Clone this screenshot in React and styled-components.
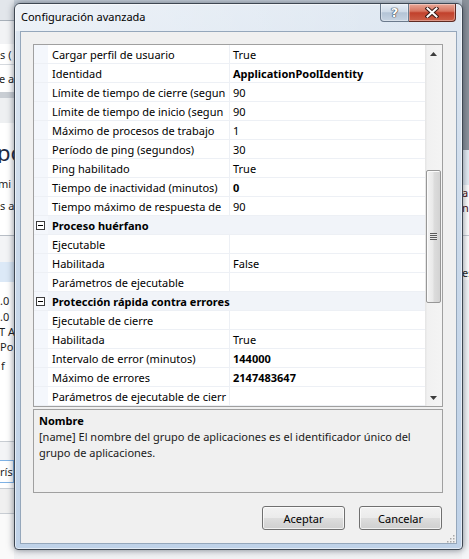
import React from 'react';
import styled, { createGlobalStyle } from 'styled-components';

const GlobalStyle = createGlobalStyle`
  html, body {
    margin: 0;
    padding: 0;
  }
  body {
    width: 469px;
    height: 559px;
    overflow: hidden;
    font-family: "Noto Sans", "DejaVu Sans", sans-serif;
    font-size: 11px;
    color: #000;
  }
`;

// ---- background window (only thin strips show around the dialog) ----

const Desktop = styled.div`
  position: relative;
  width: 469px;
  height: 559px;
  display: flex;
  overflow: hidden;
  background: #eef0f3;
`;

const LeftStrip = styled.div`
  width: 14px;
  display: flex;
  flex-direction: column;
  overflow: hidden;
  background: #fff;
`;

const Middle = styled.div`
  flex: 1;
  background: linear-gradient(180deg, #c9d2dc 0%, #dfe4ea 20%, #f1f2f4 100%);
`;

const RightStrip = styled.div`
  width: 7px;
  display: flex;
  flex-direction: column;
  overflow: hidden;
  background: #fff;
`;

const BackRow = styled.div`
  height: ${({ $h }) => $h}px;
  flex-shrink: 0;
  background: ${({ $bg }) => $bg || '#fff'};
  display: flex;
  align-items: ${({ $align }) => $align || 'center'};
  white-space: nowrap;
  overflow: hidden;
  font-size: ${({ $size }) => $size || 11}px;
  line-height: 1;
  color: ${({ $color }) => $color || '#1e1e1e'};
  margin-left: ${({ $shift }) => $shift || 0}px;
  box-sizing: border-box;
  border: ${({ $box }) => ($box ? '1px solid #7fb2e5' : 'none')};
`;

const leftRows = [
  { h: 20, bg: '#e2e6eb' },
  { h: 1, bg: '#a8b0b9' },
  { h: 23, bg: '#f2f3f5' },
  { h: 20, text: 's (' },
  { h: 1, bg: '#d5d9de' },
  { h: 27, text: 'e ap', shift: -1 },
  { h: 6, bg: '#c9ced4' },
  { h: 25, bg: '#eef0f2' },
  { h: 40, text: 'po', size: 22, color: '#1c2b45', align: 'flex-end', shift: -3 },
  { h: 8 },
  { h: 24, text: 'mi', shift: -2 },
  { h: 20, text: 's a' },
  { h: 20 },
  { h: 1, bg: '#b8bec6' },
  { h: 26, bg: '#f3f4f6' },
  { h: 20, bg: '#dce9f7' },
  { h: 10 },
  { h: 16, text: '.0' },
  { h: 16, text: '.0' },
  { h: 14, text: 'T A', shift: -1 },
  { h: 16, text: 'Po' },
  { h: 22, text: 'f', shift: 1 },
  { h: 65 },
  { h: 1, bg: '#c8cdd3' },
  { h: 18, bg: '#f3f4f6' },
  { h: 23, text: 'ríst', box: true, shift: -1 },
  { h: 5 },
  { h: 1, bg: '#c8cdd3' },
  { h: 24, bg: '#f0f0f0' },
  { h: 1, bg: '#c8cdd3' },
  { h: 60, bg: '#fafafa' },
];

const rightRows = [
  { h: 150, bg: '#8c939c' },
  { h: 35, bg: '#e6edf5' },
  { h: 15, text: 'a', color: '#4a1010' },
  { h: 15, text: 'n', color: '#4a1010' },
  { h: 20 },
  { h: 1, bg: '#c8cdd3' },
  { h: 28 },
  { h: 16, text: 'es' },
  { h: 280, bg: '#f4f6f8' },
];

// ---- dialog frame ----

const Dialog = styled.div`
  position: absolute;
  left: 14px;
  top: 3px;
  width: 449px;
  height: 547px;
  box-sizing: border-box;
  border: 1px solid #3e4752;
  border-radius: 6px 6px 4px 4px;
  background: linear-gradient(180deg, #dfe8f2 0%, #cad9ea 45%, #bfd2e8 100%);
  box-shadow: 0 0 7px rgba(20, 30, 45, 0.55), inset 0 0 0 1px rgba(255, 255, 255, 0.55);
  display: flex;
  flex-direction: column;
`;

const TitleBar = styled.div`
  height: 27px;
  flex-shrink: 0;
  display: flex;
  align-items: flex-start;
  background: linear-gradient(100deg, rgba(255, 255, 255, 0.45) 0%, rgba(255, 255, 255, 0.2) 55%, rgba(255, 255, 255, 0) 100%);
  border-radius: 5px 5px 0 0;
`;

const Title = styled.div`
  padding: 5px 0 0 6px;
  font-size: 11px;
  line-height: 15px;
  color: #000;
`;

const CaptionButtons = styled.div`
  margin-left: auto;
  margin-right: 6px;
  display: flex;
`;

const CaptionButton = styled.div`
  width: ${({ $w }) => $w}px;
  height: 18px;
  box-sizing: border-box;
  border: 1px solid ${({ $close }) => ($close ? '#5e2a22' : '#6b7a8c')};
  border-top: none;
  border-left-width: ${({ $close }) => ($close ? 0 : 1)}px;
  border-radius: ${({ $close }) => ($close ? '0 0 4px 0' : '0 0 0 4px')};
  background: ${({ $close }) =>
    $close
      ? 'linear-gradient(180deg, #e9a898 0%, #d77560 42%, #c1412c 52%, #cc6048 100%)'
      : 'linear-gradient(180deg, #e7eef6 0%, #cfdbe8 45%, #b4c4d6 52%, #c7d4e2 100%)'};
  box-shadow: inset 0 0 0 1px rgba(255, 255, 255, 0.35);
  display: flex;
  align-items: center;
  justify-content: center;
`;

const HelpGlyph = styled.span`
  font-family: "DejaVu Sans", sans-serif;
  font-weight: bold;
  font-size: 13px;
  line-height: 1;
  color: #fff;
  text-shadow: 0 0 1px #2c3440, 0 0 1px #2c3440, 0 0 1px #2c3440;
`;

const Client = styled.div`
  position: relative;
  flex: 1;
  margin: 0 5px 5px 5px;
  border: 1px solid #95a7bb;
  background: #f0f0f0;
  padding: 12px 13px 13px 12px;
  display: flex;
  flex-direction: column;
`;

// ---- property grid ----

const Grid = styled.div`
  height: 363px;
  box-sizing: border-box;
  border: 1px solid #a0a0a0;
  background: #fff;
  display: flex;
`;

const RowsArea = styled.div`
  width: 391px;
  overflow: hidden;
  display: flex;
  flex-direction: column;
`;

const Row = styled.div`
  height: 19px;
  flex-shrink: 0;
  box-sizing: border-box;
  border-bottom: 1px solid #edf0f5;
  display: flex;
  background: ${({ $category }) => ($category ? '#f1f4f9' : '#fff')};
`;

const Margin = styled.div`
  width: 14px;
  flex-shrink: 0;
  background: #f4f7fc;
  display: flex;
  align-items: center;
  padding: 1px 0 0 2px;
  box-sizing: border-box;
`;

const NameCell = styled.div`
  width: 182px;
  flex-shrink: 0;
  box-sizing: border-box;
  border-right: 1px solid #edf0f5;
  padding: 2px 0 0 4px;
  line-height: 16px;
  white-space: nowrap;
  overflow: hidden;
`;

const ValueCell = styled.div`
  flex: 1;
  padding: 2px 0 0 3px;
  line-height: 16px;
  white-space: nowrap;
  overflow: hidden;
  font-weight: ${({ $bold }) => ($bold ? 'bold' : 'normal')};
`;

const CategoryLabel = styled.div`
  padding: 2px 0 0 4px;
  line-height: 16px;
  font-weight: bold;
  white-space: nowrap;
`;

const Collapse = styled.div`
  width: 9px;
  height: 9px;
  box-sizing: border-box;
  border: 1px solid #3c3c3c;
  background: #fff;
  display: flex;
  align-items: center;
  justify-content: center;
  &::after {
    content: '';
    width: 5px;
    height: 1px;
    background: #000;
  }
`;

const ScrollBar = styled.div`
  width: 17px;
  display: flex;
  flex-direction: column;
  background: linear-gradient(90deg, #e4e4e4 0%, #f1f1f1 15%, #f4f4f4 100%);
`;

const ArrowButton = styled.div`
  height: 17px;
  flex-shrink: 0;
  display: flex;
  align-items: center;
  justify-content: center;
`;

const Track = styled.div`
  flex: 1;
  display: flex;
  flex-direction: column;
`;

const Thumb = styled.div`
  margin-top: ${({ $offset }) => $offset}px;
  margin-left: 1px;
  width: 15px;
  height: ${({ $size }) => $size}px;
  box-sizing: border-box;
  border: 1px solid #979797;
  border-radius: 2px;
  background: linear-gradient(90deg, #f3f3f3 0%, #e9e9e9 45%, #dcdcdc 55%, #d3d3d3 100%);
  box-shadow: inset 1px 1px 0 #fbfbfb;
  display: flex;
  align-items: center;
  justify-content: center;
`;

const Grip = styled.div`
  width: 7px;
  height: 7px;
  background: repeating-linear-gradient(180deg, #5a5a5a 0px, #5a5a5a 1px, #e8e8e8 1px, #e8e8e8 2px);
`;

// ---- description + buttons ----

const Description = styled.div`
  margin-top: 2px;
  height: 84px;
  box-sizing: border-box;
  border: 1px solid #a0a0a0;
  padding: 3px 5px;
  line-height: 16px;
`;

const DescTitle = styled.div`
  font-weight: bold;
`;

const DescText = styled.div`
  color: #1a1a1a;
`;

const ButtonRow = styled.div`
  margin-top: 13px;
  display: flex;
  justify-content: flex-end;
  gap: 14px;
  padding-right: 1px;
`;

const Button = styled.button`
  width: 83px;
  height: 24px;
  border: 1px solid #707070;
  border-radius: 3px;
  background: linear-gradient(180deg, #f2f2f2 0%, #ebebeb 48%, #dddddd 52%, #cfcfcf 100%);
  box-shadow: inset 0 0 0 1px rgba(255, 255, 255, 0.7);
  font-family: "Noto Sans", "DejaVu Sans", sans-serif;
  font-size: 11px;
  color: #000;
  padding: 0;
`;

const ResizeGrip = styled.svg`
  position: absolute;
  right: 1px;
  bottom: 0px;
`;

// names are cut where the grid column cuts them
const rows = [
  { name: 'Cargar perfil de usuario', value: 'True' },
  { name: 'Identidad', value: 'ApplicationPoolIdentity', bold: true },
  { name: 'Límite de tiempo de cierre (segun', value: '90' },
  { name: 'Límite de tiempo de inicio (segun', value: '90' },
  { name: 'Máximo de procesos de trabajo', value: '1' },
  { name: 'Período de ping (segundos)', value: '30' },
  { name: 'Ping habilitado', value: 'True' },
  { name: 'Tiempo de inactividad (minutos)', value: '0', bold: true },
  { name: 'Tiempo máximo de respuesta de', value: '90' },
  { category: 'Proceso huérfano' },
  { name: 'Ejecutable', value: '' },
  { name: 'Habilitada', value: 'False' },
  { name: 'Parámetros de ejecutable', value: '' },
  { category: 'Protección rápida contra errores' },
  { name: 'Ejecutable de cierre', value: '' },
  { name: 'Habilitada', value: 'True' },
  { name: 'Intervalo de error (minutos)', value: '144000', bold: true },
  { name: 'Máximo de errores', value: '2147483647', bold: true },
  { name: 'Parámetros de ejecutable de cierr', value: '' },
];

const BackStrip = ({ items }) =>
  items.map((r, i) => (
    <BackRow
      key={i}
      $h={r.h}
      $bg={r.bg}
      $size={r.size}
      $color={r.color}
      $align={r.align}
      $shift={r.shift}
      $box={r.box}
    >
      {r.text}
    </BackRow>
  ));

const CloseIcon = () => (
  <svg width="14" height="11" viewBox="0 0 14 11">
    <path d="M2.5 1.5 L11.5 9.5 M11.5 1.5 L2.5 9.5" stroke="#3a1c18" strokeWidth="4" strokeLinecap="square" />
    <path d="M2.5 1.5 L11.5 9.5 M11.5 1.5 L2.5 9.5" stroke="#fff" strokeWidth="2" strokeLinecap="square" />
  </svg>
);

const Arrow = ({ down }) => (
  <svg width="7" height="4" viewBox="0 0 7 4">
    <path d={down ? 'M0 0 H7 L3.5 4 Z' : 'M0 4 H7 L3.5 0 Z'} fill="#3c3c3c" />
  </svg>
);

const App = () => {
  return (
    <>
      <GlobalStyle />
      <Desktop>
        <LeftStrip>
          <BackStrip items={leftRows} />
        </LeftStrip>
        <Middle />
        <RightStrip>
          <BackStrip items={rightRows} />
        </RightStrip>

        <Dialog>
          <TitleBar>
            <Title>Configuración avanzada</Title>
            <CaptionButtons>
              <CaptionButton $w={29}>
                <HelpGlyph>?</HelpGlyph>
              </CaptionButton>
              <CaptionButton $w={47} $close>
                <CloseIcon />
              </CaptionButton>
            </CaptionButtons>
          </TitleBar>

          <Client>
            <Grid>
              <RowsArea>
                {rows.map((r, i) =>
                  r.category ? (
                    <Row key={i} $category>
                      <Margin>
                        <Collapse />
                      </Margin>
                      <CategoryLabel>{r.category}</CategoryLabel>
                    </Row>
                  ) : (
                    <Row key={i}>
                      <Margin />
                      <NameCell>{r.name}</NameCell>
                      <ValueCell $bold={r.bold}>{r.value}</ValueCell>
                    </Row>
                  )
                )}
              </RowsArea>
              <ScrollBar>
                <ArrowButton>
                  <Arrow />
                </ArrowButton>
                <Track>
                  <Thumb $offset={108} $size={133}>
                    <Grip />
                  </Thumb>
                </Track>
                <ArrowButton>
                  <Arrow down />
                </ArrowButton>
              </ScrollBar>
            </Grid>

            <Description>
              <DescTitle>Nombre</DescTitle>
              <DescText>
                [name] El nombre del grupo de aplicaciones es el identificador único del
                <br />
                grupo de aplicaciones.
              </DescText>
            </Description>

            <ButtonRow>
              <Button>Aceptar</Button>
              <Button>Cancelar</Button>
            </ButtonRow>

            <ResizeGrip width="8" height="8" viewBox="0 0 8 8">
              <g fill="#a8a8a8">
                <rect x="6" y="0" width="1.5" height="1.5" />
                <rect x="3" y="3" width="1.5" height="1.5" />
                <rect x="6" y="3" width="1.5" height="1.5" />
                <rect x="0" y="6" width="1.5" height="1.5" />
                <rect x="3" y="6" width="1.5" height="1.5" />
                <rect x="6" y="6" width="1.5" height="1.5" />
              </g>
            </ResizeGrip>
          </Client>
        </Dialog>
      </Desktop>
    </>
  );
};

export default App;
